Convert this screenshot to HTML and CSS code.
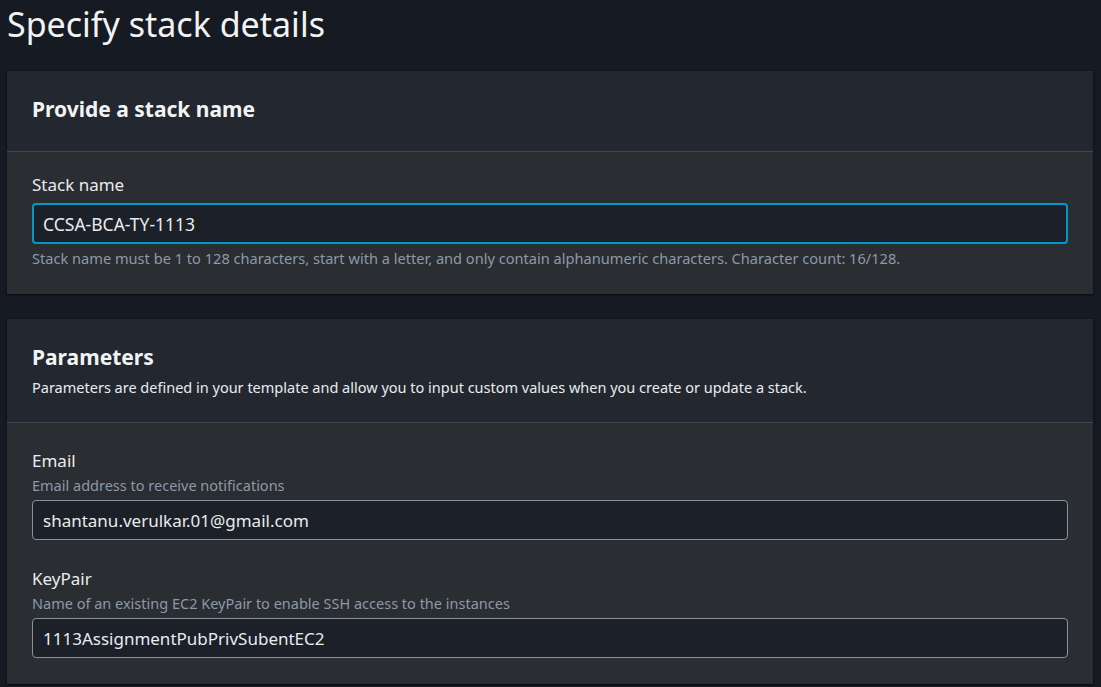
FILE: index.html
```html
<!DOCTYPE html>
<html lang="en">
<head>
<meta charset="utf-8">
<title>Specify stack details</title>
<link rel="stylesheet" href="styles.css">
</head>
<body>
<main class="page">
  <h1 class="page-title">Specify stack details</h1>

  <section class="card card-first">
    <header class="card-header">
      <h2 class="card-title">Provide a stack name</h2>
    </header>
    <div class="card-body body-stack">
      <label class="field-label" for="stackName">Stack name</label>
      <input class="text-input focused" id="stackName" type="text" value="CCSA-BCA-TY-1113">
      <p class="field-hint">Stack name must be 1 to 128 characters, start with a letter, and only contain alphanumeric characters. Character count: 16/128.</p>
    </div>
  </section>

  <section class="card card-second">
    <header class="card-header header-params">
      <h2 class="card-title">Parameters</h2>
      <p class="card-desc">Parameters are defined in your template and allow you to input custom values when you create or update a stack.</p>
    </header>
    <div class="card-body body-params">
      <div class="field">
        <label class="field-label" for="email">Email</label>
        <p class="field-desc">Email address to receive notifications</p>
        <input class="text-input" id="email" type="text" value="shantanu.verulkar.01@gmail.com">
      </div>
      <div class="field field-next">
        <label class="field-label" for="keypair">KeyPair</label>
        <p class="field-desc">Name of an existing EC2 KeyPair to enable SSH access to the instances</p>
        <input class="text-input" id="keypair" type="text" value="1113AssignmentPubPrivSubentEC2">
      </div>
    </div>
  </section>
</main>
</body>
</html>
```

FILE: styles.css
```css
* { box-sizing: border-box; }

html, body {
  margin: 0;
  padding: 0;
  background: #161a22;
  height: 100%;
  overflow: hidden;
}

body {
  font-family: "Noto Sans", "Open Sans", sans-serif;
  color: #e9ebed;
}

.page {
  padding: 0 8px 0 7px;
  display: flex;
  flex-direction: column;
}

.page-title {
  margin: 0;
  font-size: 34px;
  font-weight: 400;
  line-height: 48px;
  color: #f2f3f3;
  height: 71px;
}

.card {
  background: #2a2d32;
  box-shadow: 0 1px 2px rgba(0, 0, 0, 0.6), 0 0 1px rgba(0, 0, 0, 0.5);
  display: flex;
  flex-direction: column;
}

.card-second {
  margin-top: 25px;
}

.card-header {
  background: #232830;
  border-bottom: 1px solid #414750;
  padding: 26px 25px 30px;
}

.header-params {
  padding: 26px 25px 25px;
}

.card-title {
  margin: 0;
  font-size: 21px;
  font-weight: 700;
  line-height: 24px;
  color: #f2f3f3;
}

.card-desc {
  margin: 8px 0 0;
  font-size: 14.5px;
  line-height: 20px;
  color: #e9ebed;
}

.card-body {
  display: flex;
  flex-direction: column;
  padding: 22px 25px 26px;
}

.body-params {
  padding: 27px 25px 26px;
}

.field {
  display: flex;
  flex-direction: column;
}

.field-next {
  margin-top: 28px;
}

.field-label {
  font-size: 17px;
  line-height: 22px;
  color: #e9ebed;
}

.field-desc {
  margin: 3px 0 5px;
  font-size: 14.5px;
  line-height: 20px;
  color: #8d99a8;
}

.field-hint {
  margin: 4px 0 0;
  font-size: 14.6px;
  line-height: 20px;
  color: #8d99a8;
}

.text-input {
  display: block;
  width: 100%;
  height: 40px;
  margin: 0;
  padding: 0 10px;
  font-family: inherit;
  font-size: 17px;
  color: #e9ebed;
  background: #1b2029;
  border: 1px solid #8a9198;
  border-radius: 4px;
  outline: none;
}

.text-input.focused {
  height: 41px;
  margin-top: 7px;
  border: 2px solid #0399c6;
  padding: 0 9px;
  font-size: 17.5px;
}
```
